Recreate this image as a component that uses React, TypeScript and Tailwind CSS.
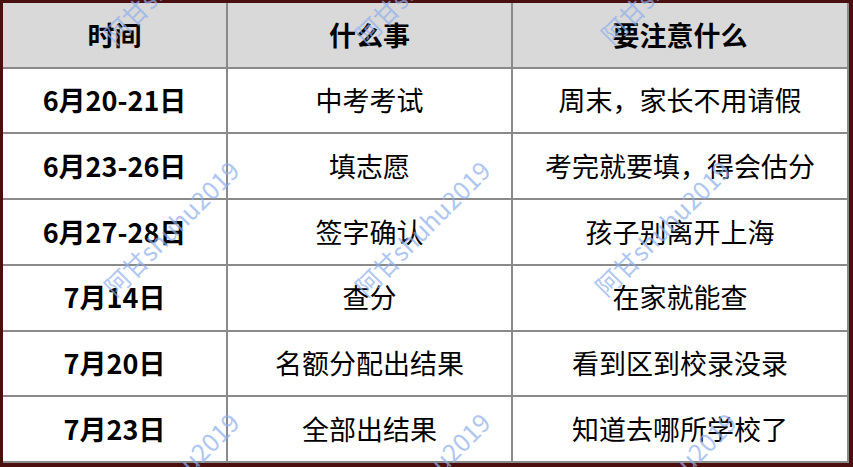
import React from "react";

const rows: [string, string, string][] = [
  ["6月20-21日", "中考考试", "周末，家长不用请假"],
  ["6月23-26日", "填志愿", "考完就要填，得会估分"],
  ["6月27-28日", "签字确认", "孩子别离开上海"],
  ["7月14日", "查分", "在家就能查"],
  ["7月20日", "名额分配出结果", "看到区到校录没录"],
  ["7月23日", "全部出结果", "知道去哪所学校了"],
];

const marks: [number, number][] = [
  [171, -24], [422, -24], [668, -24],
  [171, 228], [422, 228], [662, 228],
  [171, 480], [422, 480], [668, 480],
];

export default function App() {
  return (
    <div
      className="relative w-[853px] h-[467px] overflow-hidden bg-[#4b0f10] pl-[3px] pt-[3px] pr-[4px] pb-[4px]"
      style={{ fontFamily: '"Noto Sans CJK SC", "Noto Sans", sans-serif' }}
    >
      <div className="grid h-full w-full grid-cols-[223px_283px_1fr] grid-rows-7 gap-[2px] bg-[#8a8a8a] pr-[2px] pb-[2px]">
        {["时间", "什么事", "要注意什么"].map((h) => (
          <div
            key={h}
            className="flex items-center justify-center bg-[#d9d9d9] text-[27px] font-bold text-black"
          >
            {h}
          </div>
        ))}
        {rows.map((r) => (
          <React.Fragment key={r[0]}>
            <div className="flex items-center justify-center bg-white text-[27px] font-bold text-black">
              {r[0]}
            </div>
            <div className="flex items-center justify-center bg-white text-[27px] text-black">
              {r[1]}
            </div>
            <div className="flex items-center justify-center bg-white text-[27px] text-black">
              {r[2]}
            </div>
          </React.Fragment>
        ))}
      </div>
      {marks.map(([x, y], i) => (
        <span
          key={i}
          className="pointer-events-none absolute whitespace-nowrap text-[25px] leading-none text-[#8fb0ec] opacity-70"
          style={{ left: x, top: y, transform: "translate(-50%, -50%) rotate(-45deg)" }}
        >
          阿甘shuhu2019
        </span>
      ))}
    </div>
  );
}
